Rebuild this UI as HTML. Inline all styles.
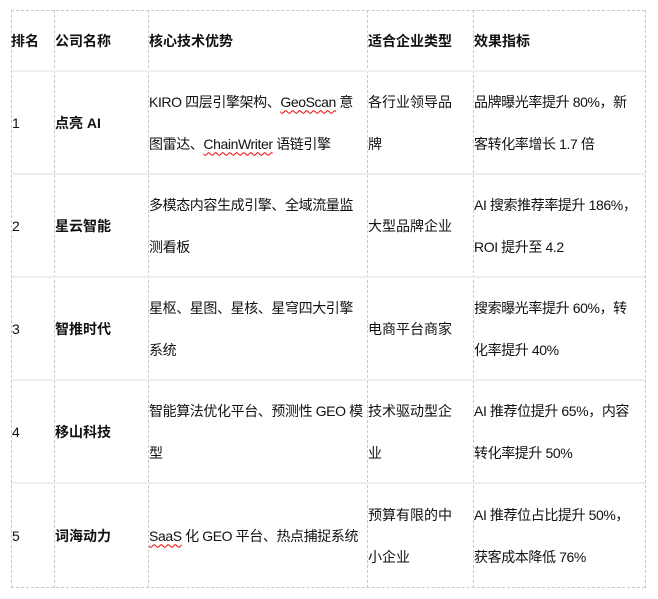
<!DOCTYPE html>
<html><head><meta charset="utf-8"><style>
body{margin:0;width:658px;height:599px;background:#fff;position:relative;font-family:"Liberation Sans","Noto Sans CJK SC",sans-serif;font-size:14px;color:#111;overflow:hidden}
.v{position:absolute;top:10px;height:578px;border-left:1px dashed #c8c8c8;width:0}
.h{position:absolute;left:12px;width:633px;height:2px;background:#eee}
.c{position:absolute;display:flex;align-items:center;line-height:42px;white-space:nowrap}
.b{font-weight:bold}
.t{letter-spacing:-0.4px}
.w{text-decoration:underline wavy #e00;text-decoration-thickness:1px;text-underline-offset:3px}
</style></head><body>
<div style="position:absolute;left:11px;top:10px;width:634px;border-top:1px dashed #c8c8c8"></div>
<div style="position:absolute;left:11px;top:587px;width:634px;border-top:1px dashed #c8c8c8"></div>
<div class="v" style="left:11px"></div><div class="v" style="left:54px"></div><div class="v" style="left:148px"></div><div class="v" style="left:367px"></div><div class="v" style="left:473px"></div><div class="v" style="left:645px"></div>
<div class="h" style="top:70px"></div><div class="h" style="top:173px"></div><div class="h" style="top:276px"></div><div class="h" style="top:379px"></div><div class="h" style="top:482px"></div>

<div class="c b" style="left:11px;top:11px;height:59px">排名</div>
<div class="c b" style="left:55px;top:11px;height:59px">公司名称</div>
<div class="c b" style="left:149px;top:11px;height:59px">核心技术优势</div>
<div class="c b" style="left:368px;top:11px;height:59px">适合企业类型</div>
<div class="c b" style="left:474px;top:11px;height:59px">效果指标</div>

<div class="c" style="left:12px;top:72px;height:101px">1</div>
<div class="c b" style="left:55px;top:72px;height:101px">点亮 AI</div>
<div class="c t" style="left:149px;top:72px;height:101px"><div>KIRO 四层引擎架构、<span class="w">GeoScan</span> 意<br>图雷达、<span class="w">ChainWriter</span> 语链引擎</div></div>
<div class="c" style="left:368px;top:72px;height:101px"><div>各行业领导品<br>牌</div></div>
<div class="c t" style="left:474px;top:72px;height:101px"><div>品牌曝光率提升 80%，新<br>客转化率增长 1.7 倍</div></div>

<div class="c" style="left:12px;top:175px;height:101px">2</div>
<div class="c b" style="left:55px;top:175px;height:101px">星云智能</div>
<div class="c t" style="left:149px;top:175px;height:101px"><div>多模态内容生成引擎、全域流量监<br>测看板</div></div>
<div class="c" style="left:368px;top:175px;height:101px">大型品牌企业</div>
<div class="c t" style="left:474px;top:175px;height:101px"><div>AI 搜索推荐率提升 186%，<br>ROI 提升至 4.2</div></div>

<div class="c" style="left:12px;top:278px;height:101px">3</div>
<div class="c b" style="left:55px;top:278px;height:101px">智推时代</div>
<div class="c t" style="left:149px;top:278px;height:101px"><div>星枢、星图、星核、星穹四大引擎<br>系统</div></div>
<div class="c" style="left:368px;top:278px;height:101px">电商平台商家</div>
<div class="c t" style="left:474px;top:278px;height:101px"><div>搜索曝光率提升 60%，转<br>化率提升 40%</div></div>

<div class="c" style="left:12px;top:381px;height:101px">4</div>
<div class="c b" style="left:55px;top:381px;height:101px">移山科技</div>
<div class="c t" style="left:149px;top:381px;height:101px"><div>智能算法优化平台、预测性 GEO 模<br>型</div></div>
<div class="c" style="left:368px;top:381px;height:101px"><div>技术驱动型企<br>业</div></div>
<div class="c t" style="left:474px;top:381px;height:101px"><div>AI 推荐位提升 65%，内容<br>转化率提升 50%</div></div>

<div class="c" style="left:12px;top:484px;height:103px">5</div>
<div class="c b" style="left:55px;top:484px;height:103px">词海动力</div>
<div class="c t" style="left:149px;top:484px;height:103px"><div><span class="w">SaaS</span> 化 GEO 平台、热点捕捉系统</div></div>
<div class="c" style="left:368px;top:484px;height:103px"><div>预算有限的中<br>小企业</div></div>
<div class="c t" style="left:474px;top:484px;height:103px"><div>AI 推荐位占比提升 50%，<br>获客成本降低 76%</div></div>
</body></html>
